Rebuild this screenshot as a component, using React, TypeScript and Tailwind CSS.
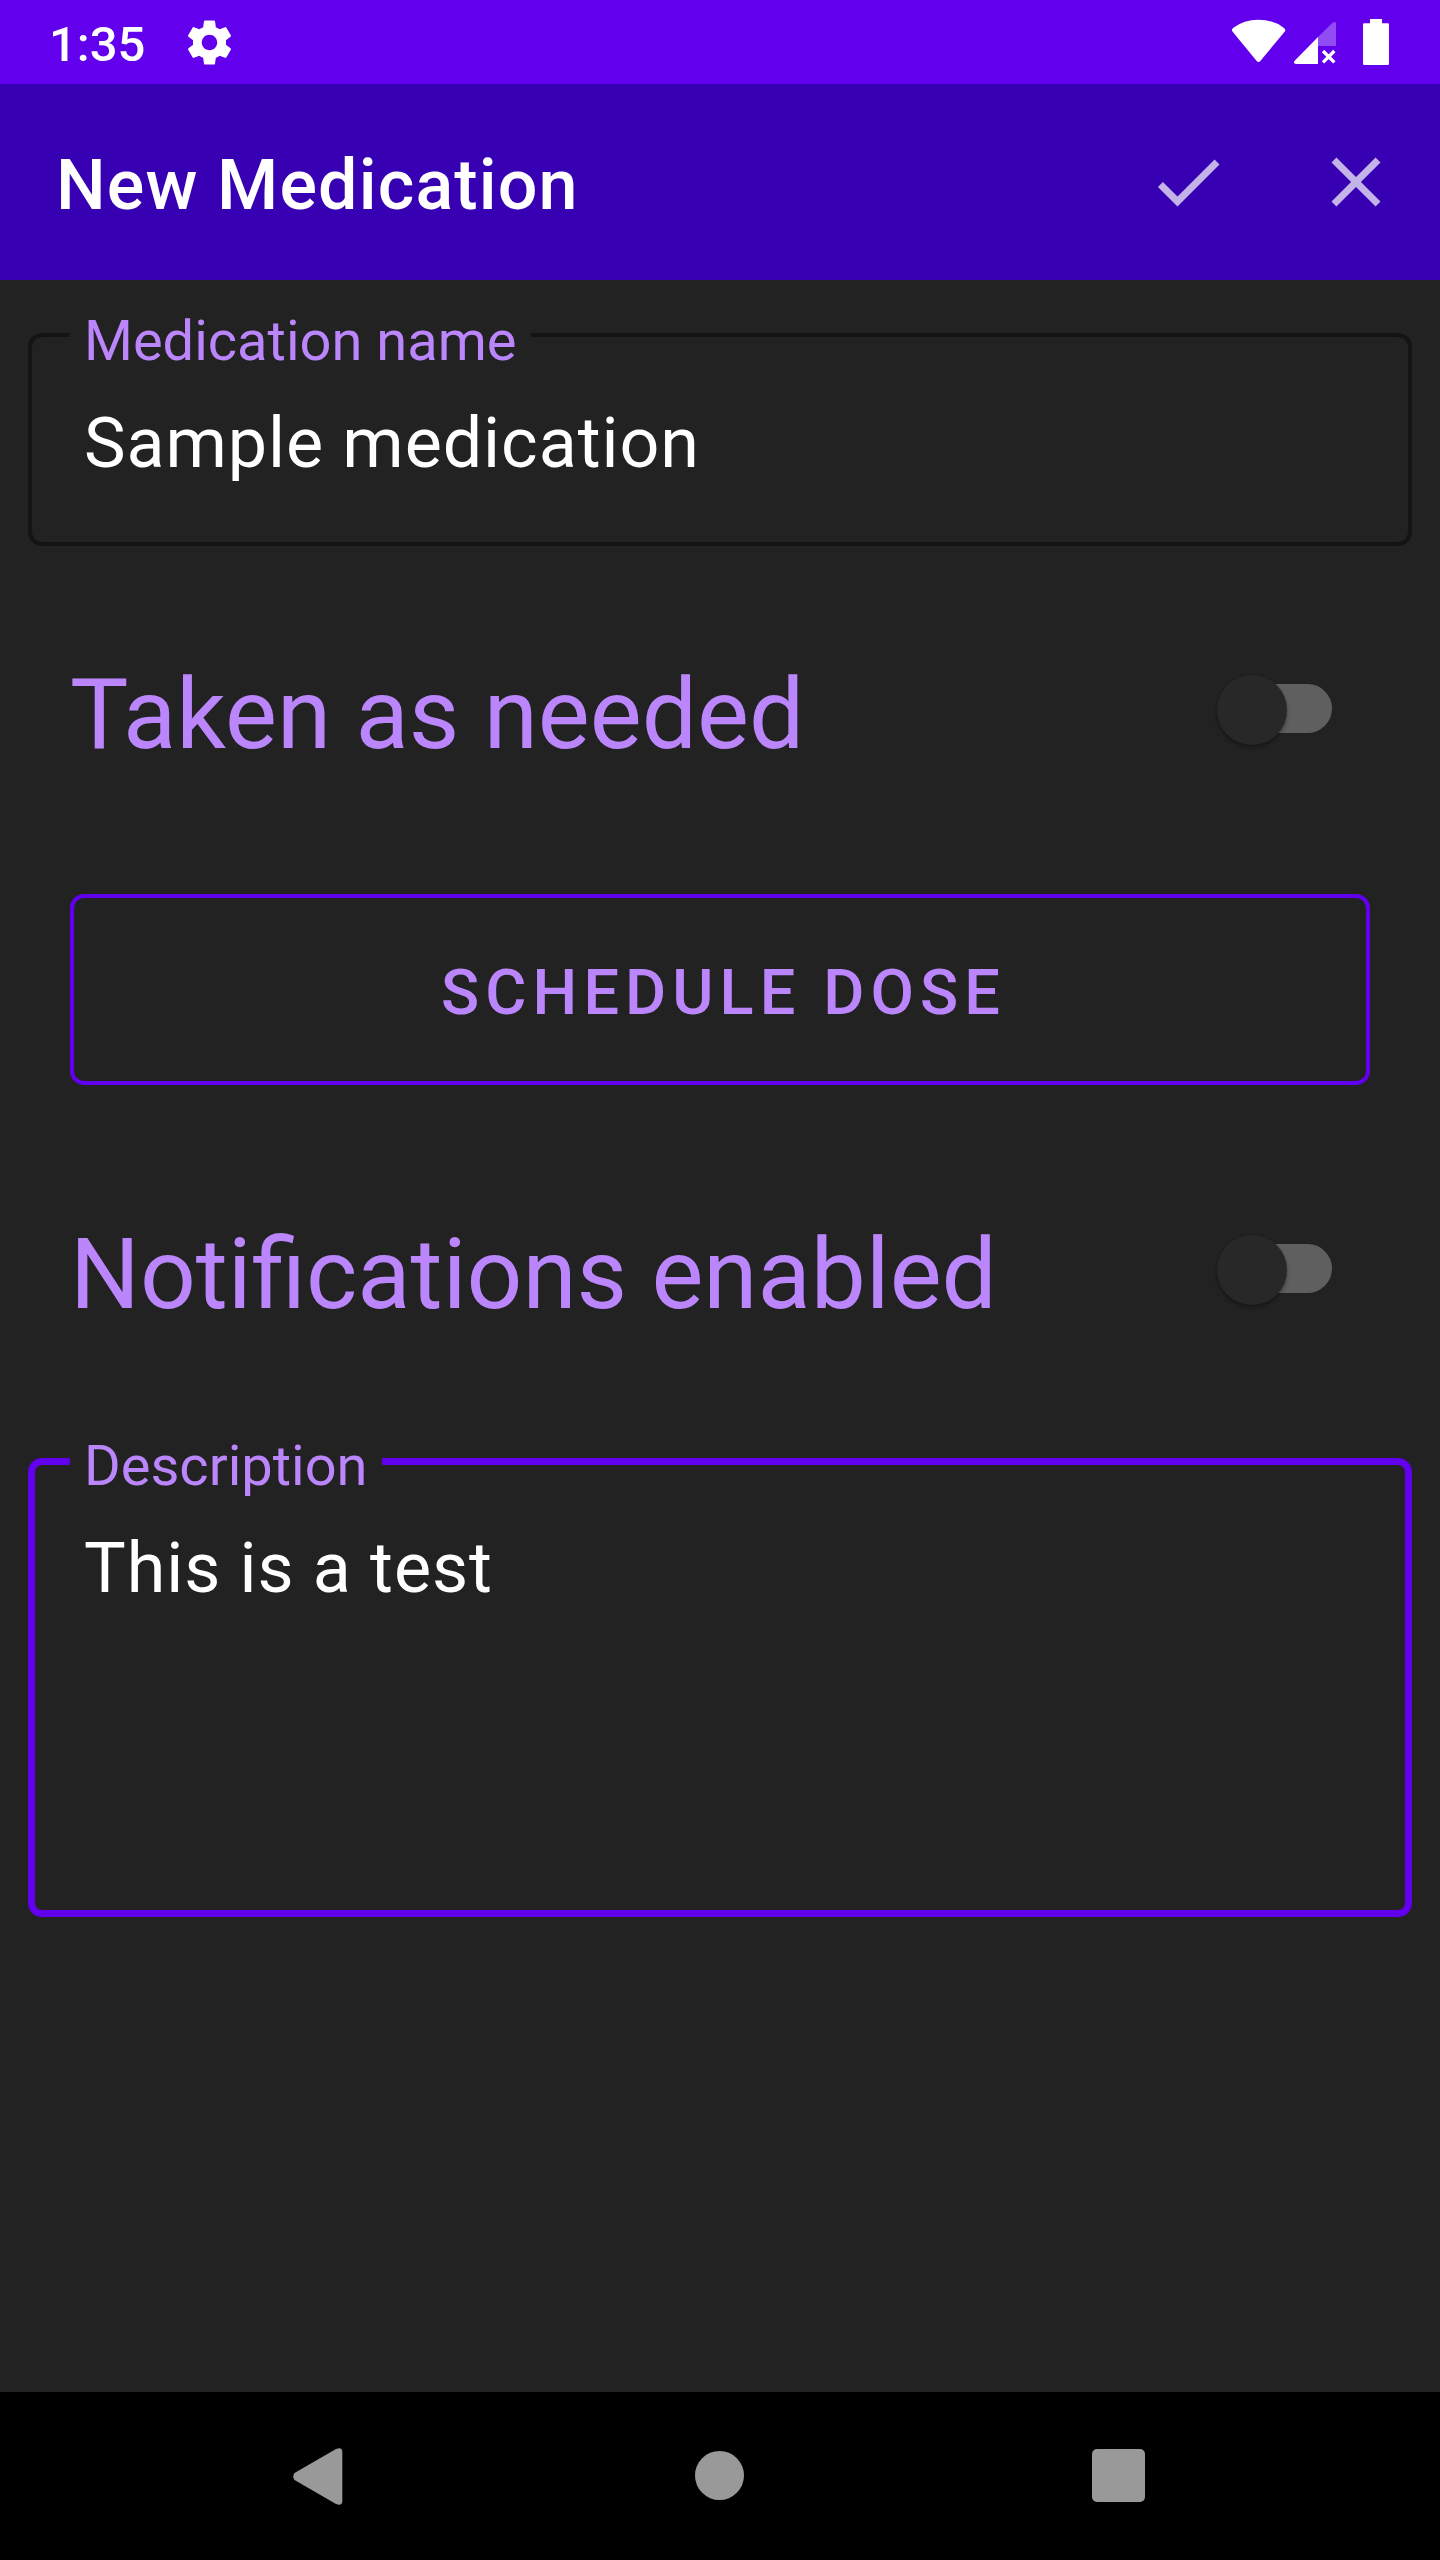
import type { ReactNode } from 'react';

function StatusBar() {
  return (
    <div className="flex h-[84px] items-center bg-[#6200ee] pl-[49px] pr-[51px] text-white">
      <span className="w-[134px] pt-[5px] text-[49px] font-medium leading-[49px]">1:35</span>
      <svg className="size-[53px]" viewBox="0 0 24 24" fill="currentColor">
        <path d="M19.43 12.98c.04-.32.07-.64.07-.98s-.03-.66-.07-.98l2.11-1.65c.19-.15.24-.42.12-.64l-2-3.46c-.12-.22-.39-.3-.61-.22l-2.49 1c-.52-.4-1.08-.73-1.69-.98l-.38-2.65C14.46 2.18 14.25 2 14 2h-4c-.25 0-.46.18-.49.42l-.38 2.65c-.61.25-1.17.59-1.69.98l-2.49-1c-.23-.09-.49 0-.61.22l-2 3.46c-.13.22-.07.49.12.64l2.11 1.65c-.04.32-.07.65-.07.98s.03.66.07.98l-2.11 1.65c-.19.15-.24.42-.12.64l2 3.46c.12.22.39.3.61.22l2.49-1c.52.4 1.08.73 1.69.98l.38 2.65c.03.24.24.42.49.42h4c.25 0 .46-.18.49-.42l.38-2.65c.61-.25 1.17-.59 1.69-.98l2.49 1c.23.09.49 0 .61-.22l2-3.46c.12-.22.07-.49-.12-.64l-2.11-1.65zM12 15.5c-1.93 0-3.5-1.57-3.5-3.5s1.57-3.5 3.5-3.5 3.5 1.57 3.5 3.5-1.57 3.5-3.5 3.5z" />
      </svg>
      <div className="ml-auto flex items-center">
        <svg className="mb-[2px] h-[44px] w-[54px]" viewBox="276 57 162 132" fill="currentColor">
          <path d="M280 83Q312 59 355.500 59T431 83Q439 89 434 95L361 183Q355.500 189 350 183L278 95Q273 89 280 83Z" />
        </svg>
        <svg className="ml-[8px] mt-[2px] size-[42px]" viewBox="462 66 126 126" fill="currentColor">
          <path d="M534 111L577 69Q588 62 588 71V138H534Z" opacity="0.3" />
          <path d="M534 111V192H468Q458 190 464 182Z" />
          <path d="M549 153L583 187M583 153L549 187" stroke="currentColor" strokeWidth="10" />
        </svg>
        <svg className="ml-[27px] h-[46px] w-[26px]" viewBox="669 57 78 138" fill="currentColor">
          <path d="M690 57h36v13h17q4 0 4 4v117q0 4-4 4H673q-4 0-4-4V74q0-4 4-4h17z" />
        </svg>
      </div>
    </div>
  );
}

function AppBar() {
  return (
    <header className="flex h-[196px] items-center bg-[#3700b3] pl-[56px] pr-[42px]">
      <h1 className="pt-[6px] text-[70px] font-medium leading-[82px] tracking-[1.15px] text-white">New Medication</h1>
      <div className="ml-auto flex gap-[84px] text-[#c3b3e8]">
        <button aria-label="Save">
          <svg className="size-[84px]" viewBox="0 0 24 24" fill="currentColor">
            <path d="M9 16.170L4.830 12l-1.420 1.410L9 19 21 7l-1.410-1.410z" />
          </svg>
        </button>
        <button aria-label="Close">
          <svg className="size-[84px]" viewBox="0 0 24 24" fill="currentColor">
            <path d="M19 6.410L17.590 5 12 10.590 6.410 5 5 6.410 10.590 12 5 17.590 6.410 19 12 13.410 17.590 19 19 17.590 13.410 12z" />
          </svg>
        </button>
      </div>
    </header>
  );
}

function Switch() {
  return (
    <div role="switch" aria-checked="false" className="relative flex h-[70px] w-[115px] items-start justify-end pt-[9px]">
      <div className="h-[49px] w-[101px] rounded-full bg-[#5f5f5f]" />
      <div className="absolute left-0 top-0 size-[70px] rounded-full bg-[#282828] shadow-[0_3px_4px_rgba(0,0,0,0.3),0_0_2px_rgba(0,0,0,0.1)]" />
    </div>
  );
}

function SwitchRow({ children }: { children: ReactNode }) {
  return (
    <div className="flex h-[206px] items-center justify-between pl-[70px] pr-[108px]">
      <span className="pt-[11px] text-[98px] leading-[116px] text-[#bb86fc]">{children}</span>
      <div className="pt-[2px]">
        <Switch />
      </div>
    </div>
  );
}

export default function App() {
  return (
    <div className="flex h-[2560px] w-[1440px] flex-col overflow-hidden bg-[#222222] font-[Roboto,sans-serif]">
      <StatusBar />
      <AppBar />
      <main className="flex flex-1 flex-col">
        <div className="relative mx-[28px] mt-[53px] h-[213px] rounded-[14px] border-4 border-[#141414] pl-[52px] pt-[65px]">
          <label className="absolute left-[38px] top-[-29px] w-[461px] whitespace-nowrap bg-[#222222] pl-[14px] text-[56px] leading-[66px] text-[#bb86fc]">
            Medication name
          </label>
          <p className="text-[70px] leading-[82px] tracking-[0.93px] text-white">Sample medication</p>
        </div>

        <div className="mt-[60px]">
          <SwitchRow>Taken as needed</SwitchRow>
        </div>

        <button className="mx-[70px] mt-[82px] h-[191px] rounded-[14px] border-4 border-[#6200ee] pl-[7px] pt-[7px] text-[63px] font-medium leading-[74px] tracking-[6.1px] text-[#bb86fc]">
          SCHEDULE DOSE
        </button>

        <div className="mt-[81px]">
          <SwitchRow>Notifications enabled</SwitchRow>
        </div>

        <div className="relative mx-[28px] mt-[86px] h-[459px] rounded-[14px] border-[7px] border-[#6200ee] pl-[49px] pt-[62px]">
          <label className="absolute left-[35px] top-[-32px] w-[312px] whitespace-nowrap bg-[#222222] pl-[14px] text-[56px] leading-[66px] text-[#bb86fc]">
            Description
          </label>
          <p className="text-[70px] leading-[82px] tracking-[0.93px] text-white">This is a test</p>
        </div>
      </main>
      <nav className="flex h-[168px] items-center bg-black pl-[293px] text-[#999999]">
        <svg className="h-[57px] w-[50px]" viewBox="0 0 50 57" fill="currentColor">
          <path d="M1.500 25L43 1Q49.300 -1.500 49.300 4V53Q49.300 58.500 43 56L1.500 32Q-1 28.500 1.500 25Z" />
        </svg>
        <div className="mb-px ml-[352px] size-[49px] rounded-full bg-[#999999]" />
        <div className="mb-px ml-[348px] size-[53px] rounded-[5px] bg-[#999999]" />
      </nav>
    </div>
  );
}
